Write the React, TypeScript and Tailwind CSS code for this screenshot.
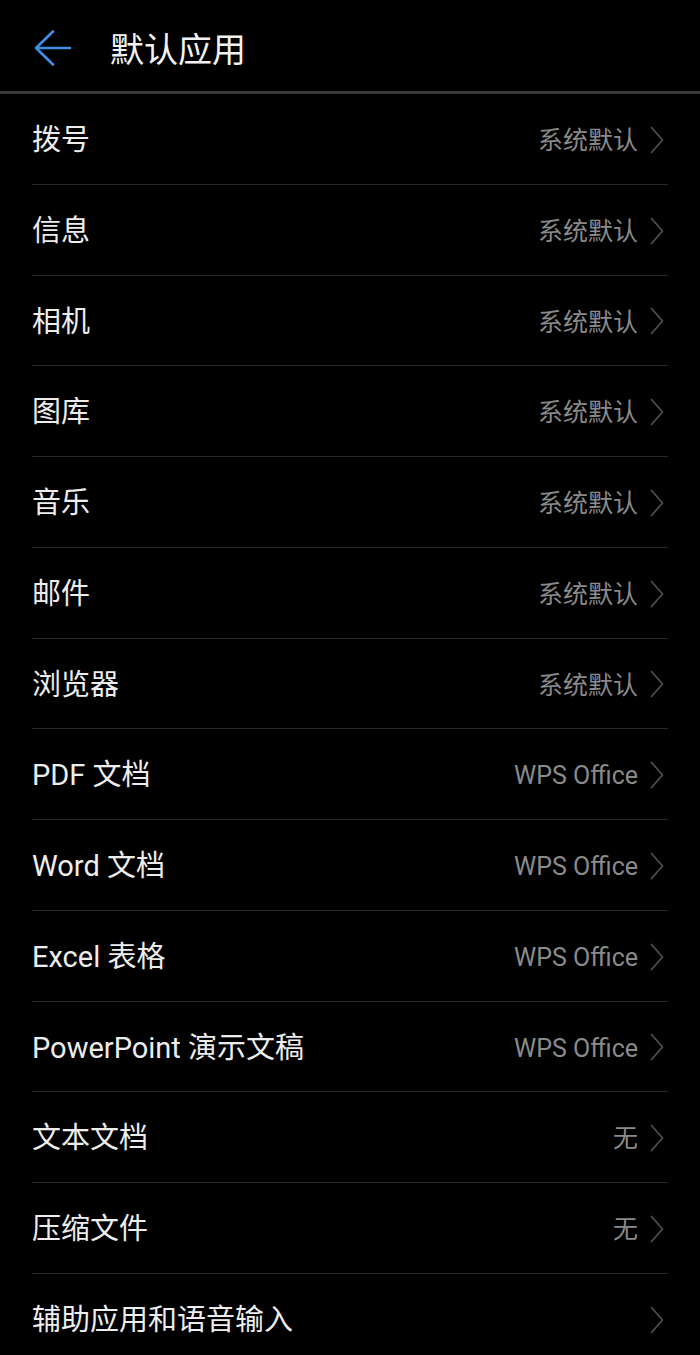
type Item = { label: string; value?: string };

const items: Item[] = [
  { label: "拨号", value: "系统默认" },
  { label: "信息", value: "系统默认" },
  { label: "相机", value: "系统默认" },
  { label: "图库", value: "系统默认" },
  { label: "音乐", value: "系统默认" },
  { label: "邮件", value: "系统默认" },
  { label: "浏览器", value: "系统默认" },
  { label: "PDF 文档", value: "WPS Office" },
  { label: "Word 文档", value: "WPS Office" },
  { label: "Excel 表格", value: "WPS Office" },
  { label: "PowerPoint 演示文稿", value: "WPS Office" },
  { label: "文本文档", value: "无" },
  { label: "压缩文件", value: "无" },
  { label: "辅助应用和语音输入" },
];

const Chevron = () => (
  <svg width="14" height="28" viewBox="0 0 14 28" fill="none" className="shrink-0">
    <path d="M1.5 1.5 L12.5 14 L1.5 26.5" stroke="#4e4e4e" strokeWidth="1.8" strokeLinecap="round" strokeLinejoin="round" />
  </svg>
);

const BackArrow = () => (
  <svg width="40" height="40" viewBox="0 0 40 40" fill="none">
    <path d="M3 20 H37 M20 3.5 L3 20 L20 36.5" stroke="#3c8fe4" strokeWidth="2.6" strokeLinecap="round" strokeLinejoin="round" />
  </svg>
);

const Row = ({ item }: { item: Item }) => (
  <div className="flex h-[90.75px] items-center justify-between border-b border-[#282828]">
    <span className="pt-[4px] text-[29px] text-[#ededed]">{item.label}</span>
    <div className="mr-[4px] flex items-center gap-[12px] pt-[2px]">
      {item.value && <span className="pt-[2px] text-[25px] text-[#8a8a8a]">{item.value}</span>}
      <Chevron />
    </div>
  </div>
);

export default function App() {
  return (
    <div
      className="w-[700px] h-[1355px] overflow-hidden bg-black"
      style={{ fontFamily: "Roboto, 'Noto Sans CJK SC', sans-serif" }}
    >
      <header className="flex h-[91px] items-center pl-[33px]">
        <div className="pt-[5px]">
          <BackArrow />
        </div>
        <h1 className="ml-[37px] pt-[9px] text-[34px] text-[#f2f2f2]">默认应用</h1>
      </header>
      <div className="h-[3px] bg-[#383838]" />
      <main className="pl-[32px] pr-[32px]">
        {items.map((item, id) => (
          <Row item={item} key={id} />
        ))}
      </main>
    </div>
  );
}
